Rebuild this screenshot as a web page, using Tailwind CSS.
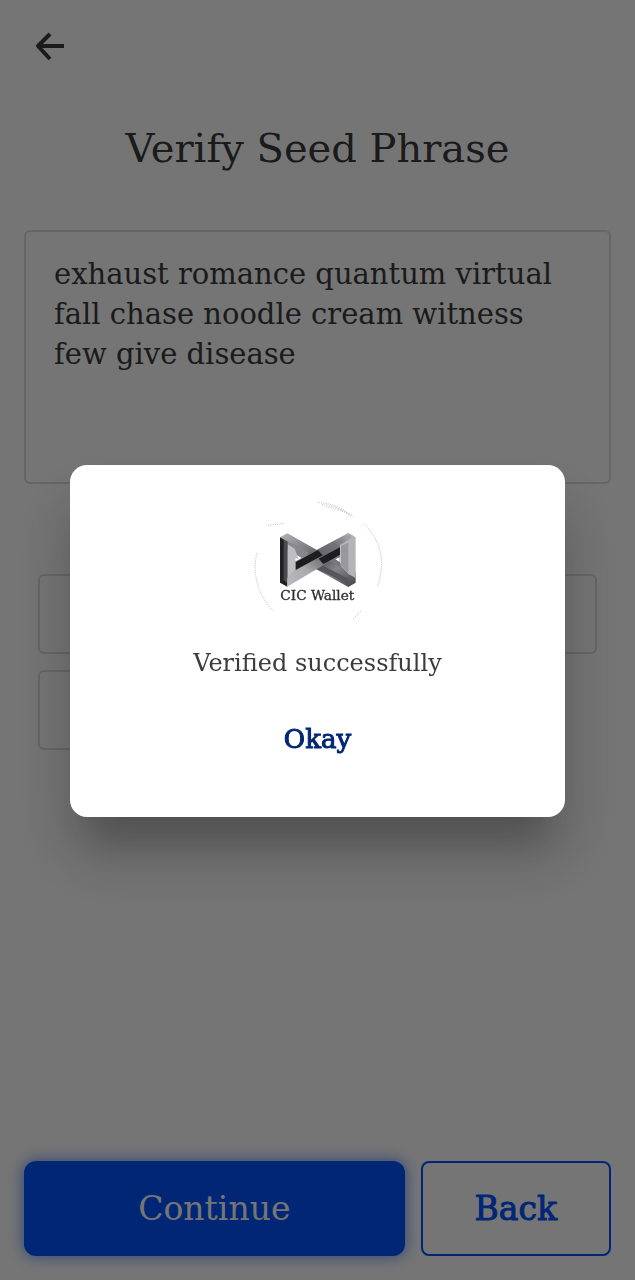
<!DOCTYPE html>
<html lang="en">
<head>
<meta charset="utf-8">
<meta name="viewport" content="width=device-width, initial-scale=1">
<title>Verify Seed Phrase</title>
<script src="https://cdn.jsdelivr.net/npm/@tailwindcss/browser@4"></script>
</head>
<body class="bg-white font-['DejaVu_Serif',serif] text-[#3c3c3e]">
<div class="flex min-h-screen flex-col px-6 pt-6 pb-6">
  <header>
    <button type="button" aria-label="Go back" class="block px-1">
      <svg class="size-11" viewBox="0 0 44 44" fill="none" stroke="currentColor" stroke-width="4" stroke-linejoin="round"><path d="M36 22H10M22 10 10 22l12 13"/></svg>
    </button>
  </header>
  <main class="flex grow flex-col">
    <h1 class="mt-14 text-center text-[40px] leading-12">Verify Seed Phrase</h1>
    <textarea aria-label="Seed phrase" readonly class="mt-[58px] block h-[254px] w-full resize-none overflow-hidden rounded-md border-2 border-[#dedee2] px-7 py-[22px] text-[29px] leading-10 outline-none">exhaust romance quantum virtual fall chase noodle cream witness few give disease</textarea>
    <div class="mt-[90px] grid grid-cols-3 gap-4 px-3.5">
      <div class="h-20 rounded-md border-2 border-[#dedee2]"></div>
      <div class="h-20 rounded-md border-2 border-[#dedee2]"></div>
      <div class="h-20 rounded-md border-2 border-[#dedee2]"></div>
      <div class="h-20 rounded-md border-2 border-[#dedee2]"></div>
    </div>
  </main>
  <footer class="grid grid-cols-[2fr_1fr] gap-4">
    <button type="button" class="h-[95px] rounded-xl bg-[#0053ff] text-[33px] text-white shadow-[0_0_14px_2px_#0053ff80]">Continue</button>
    <button type="button" class="h-[95px] rounded-lg border-2 border-[#0053ff] text-[33px] text-[#0053ff] [-webkit-text-stroke:1px_currentColor]">Back</button>
  </footer>
</div>

<div class="fixed inset-0 flex items-center justify-center bg-black/54 px-[70px] pt-0.5">
  <div role="dialog" aria-modal="true" aria-labelledby="message" class="flex w-full flex-col items-center rounded-[17px] bg-white pt-[25px] pb-[54px] shadow-[0_40px_36px_-20px_#0000002e,0_38px_60px_6px_#00000030]">
    <svg class="h-[140px] w-[155px]" viewBox="0 0 465 420" role="img" aria-label="CIC Wallet">
      <defs>
        <linearGradient id="down" x1="0" y1="0" x2="1" y2="1"><stop offset="0" stop-color="#b4b4b8"/><stop offset=".35" stop-color="#77777b"/><stop offset=".5" stop-color="#4a4a4d"/><stop offset=".7" stop-color="#85858a"/><stop offset="1" stop-color="#444447"/></linearGradient>
        <linearGradient id="up" x1="0" y1="1" x2="1" y2="0"><stop offset="0" stop-color="#bcbcc0"/><stop offset=".3" stop-color="#aaaaae"/><stop offset=".55" stop-color="#68686c"/><stop offset=".75" stop-color="#737377"/><stop offset="1" stop-color="#b8b8bc"/></linearGradient>
      </defs>
      <g fill="none" stroke="#b5b5b9" stroke-width="3" stroke-dasharray="3 4">
        <path d="M236 38q55 2 104 42M374 103q77 82 37 188M50 190q-20 95 48 172M340 386l22-22"/>
        <path d="M246 44q45 2 88 34M258 52q35 2 68 22M84 106l48-6"/>
      </g>
      <path d="M120 142 142 130 347 246 347 278 325 291 222 234 206 216 142 178Z" fill="url(#down)"/>
      <path d="M142 153 206 188 190 206 142 178Z" fill="#88888c"/>
      <path d="M325 130 347 142 347 264 325 252 302 226 302 160Z" fill="#b4b4b8"/>
      <path d="M325 158v92l-22-26v-56Z" fill="#98989c"/>
      <path d="M240 222 325 266 325 282 225 234Z" fill="#56565a"/>
      <path d="M142 162 164 176 176 208 167 240 196 250 142 290Z" fill="#bebec2"/>
      <path d="M120 142 142 155 142 290 120 278Z" fill="#202023"/>
      <path d="M131 148 142 155 142 280 131 270Z" fill="#4b4b4e"/>
      <path d="M142 290 142 264 166 238 166 214 325 129 342 139 301 164 301 195Z" fill="url(#up)"/>
      <path d="M167 216 234 180 248 196 167 240Z" fill="#1d1d20"/>
      <path d="M236 206 300 172 300 195 250 222Z" fill="#1d1d20"/>
      <path d="M268 214 301 194 301 232Z" fill="#77777b"/>
      <path d="M166 205 178 207 167 213ZM286 208 299 202 299 216Z" fill="#fff"/>
      <text x="232" y="329" text-anchor="middle" font-family="DejaVu Serif" font-size="41" fill="#303033" stroke="#303033">CIC Wallet</text>
    </svg>
    <p id="message" class="mt-[17px] text-2xl leading-8">Verified successfully</p>
    <button type="button" class="mt-9 text-[26px] leading-12 text-[#002675] [-webkit-text-stroke:1px_currentColor]">Okay</button>
  </div>
</div>
</body>
</html>
